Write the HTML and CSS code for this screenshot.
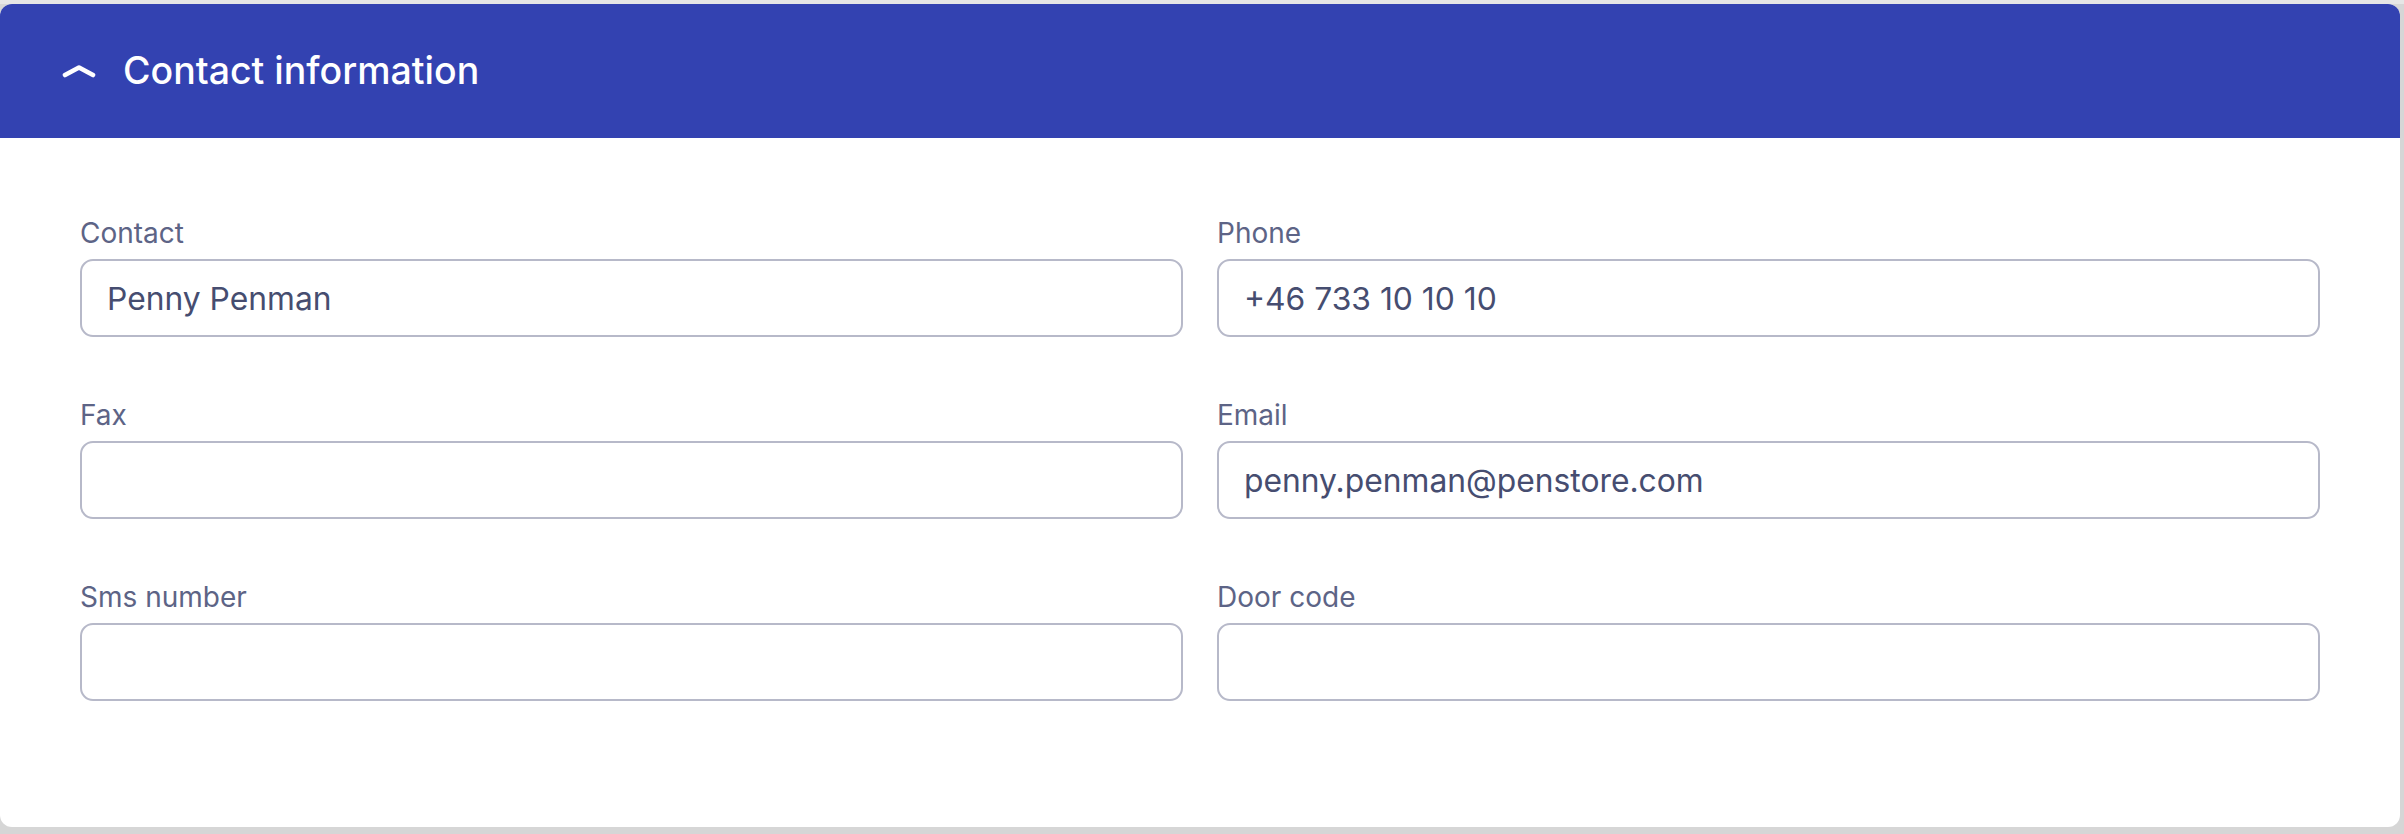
FILE: index.html
```html
<!DOCTYPE html>
<html lang="en">
<head>
<meta charset="utf-8">
<title>Contact information</title>
<link rel="stylesheet" href="styles.css">
</head>
<body>
<section class="card">
  <header class="card-header">
    <svg class="chevron" width="34" height="14" viewBox="0 0 34 14" aria-hidden="true">
      <path d="M3 11 L17 3.5 L31 11" fill="none" stroke="#ffffff" stroke-width="4.6" stroke-linecap="round" stroke-linejoin="round"/>
    </svg>
    <h2 class="card-title">Contact information</h2>
  </header>
  <div class="card-body">
    <div class="field">
      <label class="field-label">Contact</label>
      <div class="field-input">Penny Penman</div>
    </div>
    <div class="field">
      <label class="field-label">Phone</label>
      <div class="field-input">+46 733 10 10 10</div>
    </div>
    <div class="field">
      <label class="field-label">Fax</label>
      <div class="field-input"></div>
    </div>
    <div class="field">
      <label class="field-label">Email</label>
      <div class="field-input">penny.penman@penstore.com</div>
    </div>
    <div class="field">
      <label class="field-label">Sms number</label>
      <div class="field-input"></div>
    </div>
    <div class="field">
      <label class="field-label">Door code</label>
      <div class="field-input"></div>
    </div>
  </div>
</section>
</body>
</html>
```
FILE: styles.css
```css
* { box-sizing: border-box; }

html, body {
  margin: 0;
  padding: 0;
}

body {
  background: #d8d8d8;
  background: linear-gradient(#e6e6e6 0, #e6e6e6 4px, #d6d6d6 4px);
  padding: 4px 4px 7px 0;
  font-family: Inter, "Noto Sans", sans-serif;
  width: 2404px;
  height: 834px;
}

.card {
  width: 2400px;
  height: 823px;
  background: #ffffff;
  border-radius: 12px;
  overflow: hidden;
  display: flex;
  flex-direction: column;
}

.card-header {
  height: 134px;
  flex: none;
  background: #3342b1;
  display: flex;
  align-items: center;
  padding-left: 62px;
  gap: 27px;
}

.chevron {
  display: block;
  flex: none;
  margin-top: -1px;
}

.card-title {
  margin: 0;
  color: #ffffff;
  font-size: 37.5px;
  font-weight: 500;
  line-height: 44px;
  letter-spacing: 0;
}

.card-body {
  display: grid;
  grid-template-columns: 1fr 1fr;
  column-gap: 34px;
  row-gap: 62px;
  padding: 79px 80px 0 80px;
}

.field {
  display: flex;
  flex-direction: column;
}

.field-label {
  font-size: 28px;
  line-height: 33px;
  color: #5d6486;
  margin-bottom: 9px;
}

.field-input {
  height: 78px;
  border: 2px solid #b7b9c9;
  border-radius: 13px;
  padding: 0 25px;
  display: flex;
  align-items: center;
  font-size: 31.8px;
  color: #464d70;
}
```
